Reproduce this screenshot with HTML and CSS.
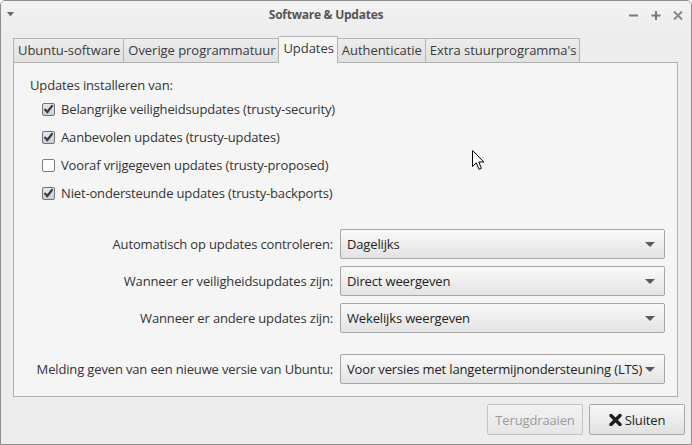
FILE: index.html
```html
<!DOCTYPE html>
<html>
<head>
<meta charset="utf-8">
<link rel="stylesheet" href="styles.css">
</head>
<body>
<div class="window">
  <div class="titlebar">
    <div class="tb-left">
      <svg width="8" height="5" viewBox="0 0 8 5"><path d="M0 0H7L3.5 4.5Z" fill="#6a6a6a"/></svg>
    </div>
    <div class="title">Software &amp; Updates</div>
    <div class="tb-right">
      <svg width="12" height="12" viewBox="0 0 12 12"><path d="M1 6.5H10" stroke="#7a7a7a" stroke-width="2"/></svg>
      <svg width="12" height="12" viewBox="0 0 12 12"><path d="M1.5 6.5H10.5M6 2V11" stroke="#7a7a7a" stroke-width="2"/></svg>
      <svg width="12" height="12" viewBox="0 0 12 12"><path d="M2 2.5L10 10.5M10 2.5L2 10.5" stroke="#8a8a8a" stroke-width="2"/></svg>
    </div>
  </div>
  <div class="body">
    <div class="notebook">
      <div class="tabs">
        <div class="tab">Ubuntu-software</div>
        <div class="tab">Overige programmatuur</div>
        <div class="tab active">Updates</div>
        <div class="tab">Authenticatie</div>
        <div class="tab">Extra stuurprogramma's</div>
      </div>
      <div class="panel">
        <div class="heading">Updates installeren van:</div>
        <div class="checks">
          <div class="check"><span class="box on"><svg width="11" height="10" viewBox="0 0 11 10"><path d="M1.5 5L4.3 8L9.6 1.2" fill="none" stroke="#3d3d3d" stroke-width="2.2"/></svg></span>Belangrijke veiligheidsupdates (trusty-security)</div>
          <div class="check"><span class="box on"><svg width="11" height="10" viewBox="0 0 11 10"><path d="M1.5 5L4.3 8L9.6 1.2" fill="none" stroke="#3d3d3d" stroke-width="2.2"/></svg></span>Aanbevolen updates (trusty-updates)</div>
          <div class="check"><span class="box"></span>Vooraf vrijgegeven updates (trusty-proposed)</div>
          <div class="check"><span class="box on"><svg width="11" height="10" viewBox="0 0 11 10"><path d="M1.5 5L4.3 8L9.6 1.2" fill="none" stroke="#3d3d3d" stroke-width="2.2"/></svg></span>Niet-ondersteunde updates (trusty-backports)</div>
        </div>
        <div class="form">
          <div class="label">Automatisch op updates controleren:</div>
          <div class="combo"><span>Dagelijks</span><i class="arrow"></i></div>
          <div class="label">Wanneer er veiligheidsupdates zijn:</div>
          <div class="combo"><span>Direct weergeven</span><i class="arrow"></i></div>
          <div class="label">Wanneer er andere updates zijn:</div>
          <div class="combo"><span>Wekelijks weergeven</span><i class="arrow"></i></div>
          <div class="label sep">Melding geven van een nieuwe versie van Ubuntu:</div>
          <div class="combo sep"><span>Voor versies met langetermijnondersteuning (LTS)</span><i class="arrow"></i></div>
        </div>
      </div>
    </div>
    <div class="buttons">
      <div class="btn disabled">Terugdraaien</div>
      <div class="btn"><svg width="13" height="12" viewBox="0 0 13 12"><path d="M2 1.5L11 10.5M11 1.5L2 10.5" stroke="#1e1e1e" stroke-width="3.4" stroke-linecap="round"/></svg>Sluiten</div>
    </div>
  </div>
  <svg class="cursor" width="13" height="21" viewBox="0 0 13 21"><path d="M0.5 0.5V16.5L4.3 12.8L7 19.3L9.4 18.3L6.8 12H11.8Z" fill="#fff" stroke="#000" stroke-width="1" stroke-linejoin="miter"/></svg>
</div>
</body>
</html>
```

FILE: styles.css
```css
* { box-sizing: border-box; }
html, body { margin: 0; padding: 0; }
body {
  width: 692px;
  height: 445px;
  font-family: "Open Sans", "DejaVu Sans", sans-serif;
  font-size: 13px;
  color: #333333;
  background: #ffffff;
}
.window {
  position: relative;
  width: 692px;
  height: 445px;
  border: 1px solid #8c8c8c;
  border-radius: 5px 5px 0 0;
  background: #ededed;
  display: flex;
  flex-direction: column;
  overflow: hidden;
}
.titlebar {
  height: 27px;
  display: flex;
  align-items: center;
  background: linear-gradient(#f3f3f3, #ededed);
}
.tb-left {
  width: 30px;
  padding-left: 6px;
  display: flex;
  align-items: center;
}
.title {
  flex: 1;
  text-align: center;
  font-weight: 700;
  font-size: 12px;
  color: #555555;
  letter-spacing: -0.25px;
}
.tb-right {
  width: 70px;
  display: flex;
  gap: 10px;
  padding-left: 7px;
  align-items: center;
}
.body {
  flex: 1;
  display: flex;
  flex-direction: column;
  padding: 8px 13px 0 12px;
}
.notebook { display: flex; flex-direction: column; }
.tabs {
  display: flex;
  align-items: flex-end;
  height: 26px;
  position: relative;
  z-index: 1;
}
.tab {
  height: 24px;
  line-height: 22px;
  padding: 0 3px 0 4px;
  border: 1px solid #b4b4b4;
  border-right: none;
  border-bottom: none;
  background: linear-gradient(#ececec, #e0e0e0);
  color: #3a3a3a;
  white-space: nowrap;
  letter-spacing: -0.05px;
}
.tab:nth-child(5) { border-right: 1px solid #b4b4b4; }
.tab.active {
  height: 27px;
  margin-bottom: -1px;
  line-height: 23px;
  background: #f5f5f5;
  border: 1px solid #b4b4b4;
  border-bottom: none;
  border-radius: 2px 2px 0 0;
  padding: 0 3px 0 4px;
}
.tab.active + .tab { border-left: none; }
.panel {
  height: 335px;
  background: #f5f5f5;
  border: 1px solid #b0b0b0;
  padding: 12px 12px 12px 16px;
  display: flex;
  flex-direction: column;
  letter-spacing: -0.15px;
}
.heading {
  height: 20px;
  line-height: 20px;
}
.checks {
  padding-left: 12px;
  display: flex;
  flex-direction: column;
}
.check {
  height: 28px;
  display: flex;
  align-items: center;
  gap: 6px;
}
.box {
  width: 13px;
  height: 13px;
  border: 1px solid #7d7d7d;
  border-radius: 2px;
  background: #ffffff;
  display: flex;
  align-items: center;
  justify-content: center;
}
.box.on {
  background: linear-gradient(#e6e9ee, #c9ced6);
  border-color: #6f747c;
}
.form {
  margin-top: 22px;
  display: grid;
  grid-template-columns: 1fr 325px;
  column-gap: 7px;
  row-gap: 7px;
  align-items: center;
}
.label {
  text-align: right;
  white-space: nowrap;
}
.sep { margin-top: 14px; }
.combo {
  height: 30px;
  border: 1px solid #a6a6a6;
  border-radius: 2px;
  background: linear-gradient(#f9f9f9, #e3e3e3);
  display: flex;
  align-items: center;
  justify-content: space-between;
  padding: 0 9px 0 6px;
  color: #222222;
  white-space: nowrap;
}
.arrow {
  width: 0;
  height: 0;
  border-left: 5px solid transparent;
  border-right: 5px solid transparent;
  border-top: 5px solid #5a5a5a;
}
.buttons {
  display: flex;
  justify-content: flex-end;
  gap: 6px;
  margin-top: 7px;
  margin-right: -7px;
  letter-spacing: -0.15px;
}
.btn {
  width: 96px;
  height: 31px;
  border: 1px solid #a8a8a8;
  border-radius: 2px;
  background: linear-gradient(#f7f7f7, #e1e1e1);
  display: flex;
  align-items: center;
  justify-content: center;
  gap: 3px;
  color: #222222;
}
.btn.disabled {
  color: #9a9a9a;
  border-color: #c4c4c4;
  background: linear-gradient(#f2f2f2, #e6e6e6);
}
.cursor {
  position: absolute;
  left: 471px;
  top: 149px;
}
```
